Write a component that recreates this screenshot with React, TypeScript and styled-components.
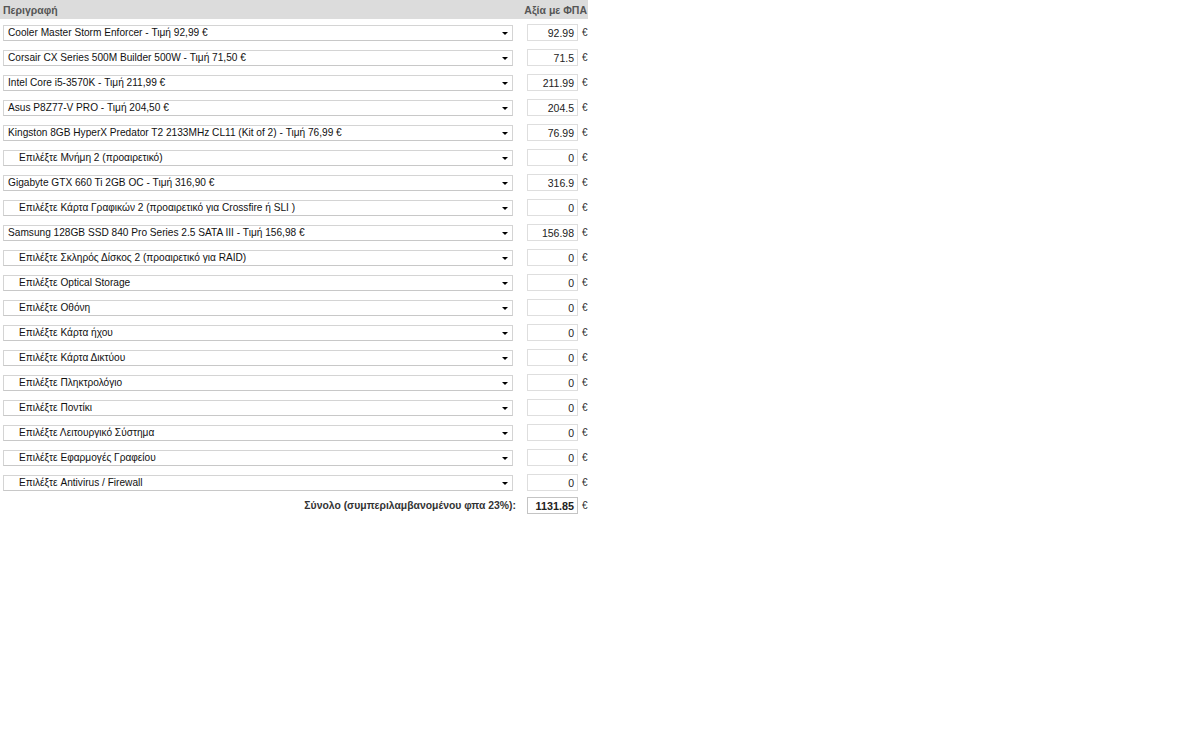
import React from "react";
import styled, { createGlobalStyle } from "styled-components";

const Global = createGlobalStyle`
  html, body { margin: 0; padding: 0; background: #fff; }
  body { font-family: "Liberation Sans", Arial, sans-serif; }
`;

const Page = styled.div`
  width: 588px;
  font-family: "Liberation Sans", Arial, sans-serif;
  font-size: 10.15px;
  color: #111;
`;

const Header = styled.div`
  display: flex;
  align-items: center;
  justify-content: space-between;
  height: 19px;
  background: #dcdcdc;
  padding: 0 1px 0 3px;
  font-weight: bold;
  color: #555;
  font-size: 10.5px;
`;

const Row = styled.div`
  display: flex;
  align-items: center;
  height: 25px;
  box-sizing: border-box;
  padding: 2px 0 0 3px;
`;

const SelectBox = styled.div<{ $indent: boolean }>`
  position: relative;
  box-sizing: border-box;
  width: 510px;
  height: 16px;
  border: 1px solid #d4d4d4;
  border-bottom-color: #c8c8c8;
  background: #fff;
  display: flex;
  align-items: center;
  padding-left: ${(p) => (p.$indent ? "15px" : "4px")};
  color: #111;
  white-space: nowrap;
  overflow: hidden;
`;

const Arrow = styled.span`
  position: absolute;
  right: 4px;
  top: 6px;
  width: 0;
  height: 0;
  border-left: 3px solid transparent;
  border-right: 3px solid transparent;
  border-top: 3px solid #000;
`;

const Amount = styled.div<{ $bold?: boolean }>`
  box-sizing: border-box;
  width: 51px;
  height: 17px;
  margin-left: ${(p) => (p.$bold ? "11px" : "14px")};
  border: 1px solid ${(p) => (p.$bold ? "#c4c4c4" : "#dedede")};
  background: #fff;
  display: flex;
  align-items: center;
  justify-content: flex-end;
  padding-right: 3px;
  color: #222;
  font-weight: ${(p) => (p.$bold ? "bold" : "normal")};
  font-size: ${(p) => (p.$bold ? "10.8px" : "10.5px")};
`;

const Euro = styled.span`
  display: flex;
  align-items: center;
  height: 17px;
  margin-left: 4px;
  color: #333;
  font-size: 10px;
  line-height: 17px;
`;

const TotalRow = styled.div`
  display: flex;
  align-items: center;
  height: 23px;
  padding-left: 3px;
`;

const TotalLabel = styled.div`
  width: 513px;
  text-align: right;
  font-weight: bold;
  color: #333;
  font-size: 10.4px;
`;

const rows: { text: string; value: string; indent: boolean }[] = [
  { text: "Cooler Master Storm Enforcer - Τιμή 92,99 €", value: "92.99", indent: false },
  { text: "Corsair CX Series 500M Builder 500W - Τιμή 71,50 €", value: "71.5", indent: false },
  { text: "Intel Core i5-3570K - Τιμή 211,99 €", value: "211.99", indent: false },
  { text: "Asus P8Z77-V PRO - Τιμή 204,50 €", value: "204.5", indent: false },
  { text: "Kingston 8GB HyperX Predator T2 2133MHz CL11 (Kit of 2) - Τιμή 76,99 €", value: "76.99", indent: false },
  { text: "Επιλέξτε Μνήμη 2 (προαιρετικό)", value: "0", indent: true },
  { text: "Gigabyte GTX 660 Ti 2GB OC - Τιμή 316,90 €", value: "316.9", indent: false },
  { text: "Επιλέξτε Κάρτα Γραφικών 2 (προαιρετικό για Crossfire ή SLI )", value: "0", indent: true },
  { text: "Samsung 128GB SSD 840 Pro Series 2.5 SATA III - Τιμή 156,98 €", value: "156.98", indent: false },
  { text: "Επιλέξτε Σκληρός Δίσκος 2 (προαιρετικό για RAID)", value: "0", indent: true },
  { text: "Επιλέξτε Optical Storage", value: "0", indent: true },
  { text: "Επιλέξτε Οθόνη", value: "0", indent: true },
  { text: "Επιλέξτε Κάρτα ήχου", value: "0", indent: true },
  { text: "Επιλέξτε Κάρτα Δικτύου", value: "0", indent: true },
  { text: "Επιλέξτε Πληκτρολόγιο", value: "0", indent: true },
  { text: "Επιλέξτε Ποντίκι", value: "0", indent: true },
  { text: "Επιλέξτε Λειτουργικό Σύστημα", value: "0", indent: true },
  { text: "Επιλέξτε Εφαρμογές Γραφείου", value: "0", indent: true },
  { text: "Επιλέξτε Antivirus / Firewall", value: "0", indent: true },
];

export default function App() {
  return (
    <Page>
      <Global />
      <Header>
        <span>Περιγραφή</span>
        <span>Αξία με ΦΠΑ</span>
      </Header>
      {rows.map((r, i) => (
        <Row key={i}>
          <SelectBox $indent={r.indent}>
            {r.text}
            <Arrow />
          </SelectBox>
          <Amount>{r.value}</Amount>
          <Euro>€</Euro>
        </Row>
      ))}
      <TotalRow>
        <TotalLabel>Σύνολο (συμπεριλαμβανομένου φπα 23%):</TotalLabel>
        <Amount $bold>1131.85</Amount>
        <Euro>€</Euro>
      </TotalRow>
    </Page>
  );
}
